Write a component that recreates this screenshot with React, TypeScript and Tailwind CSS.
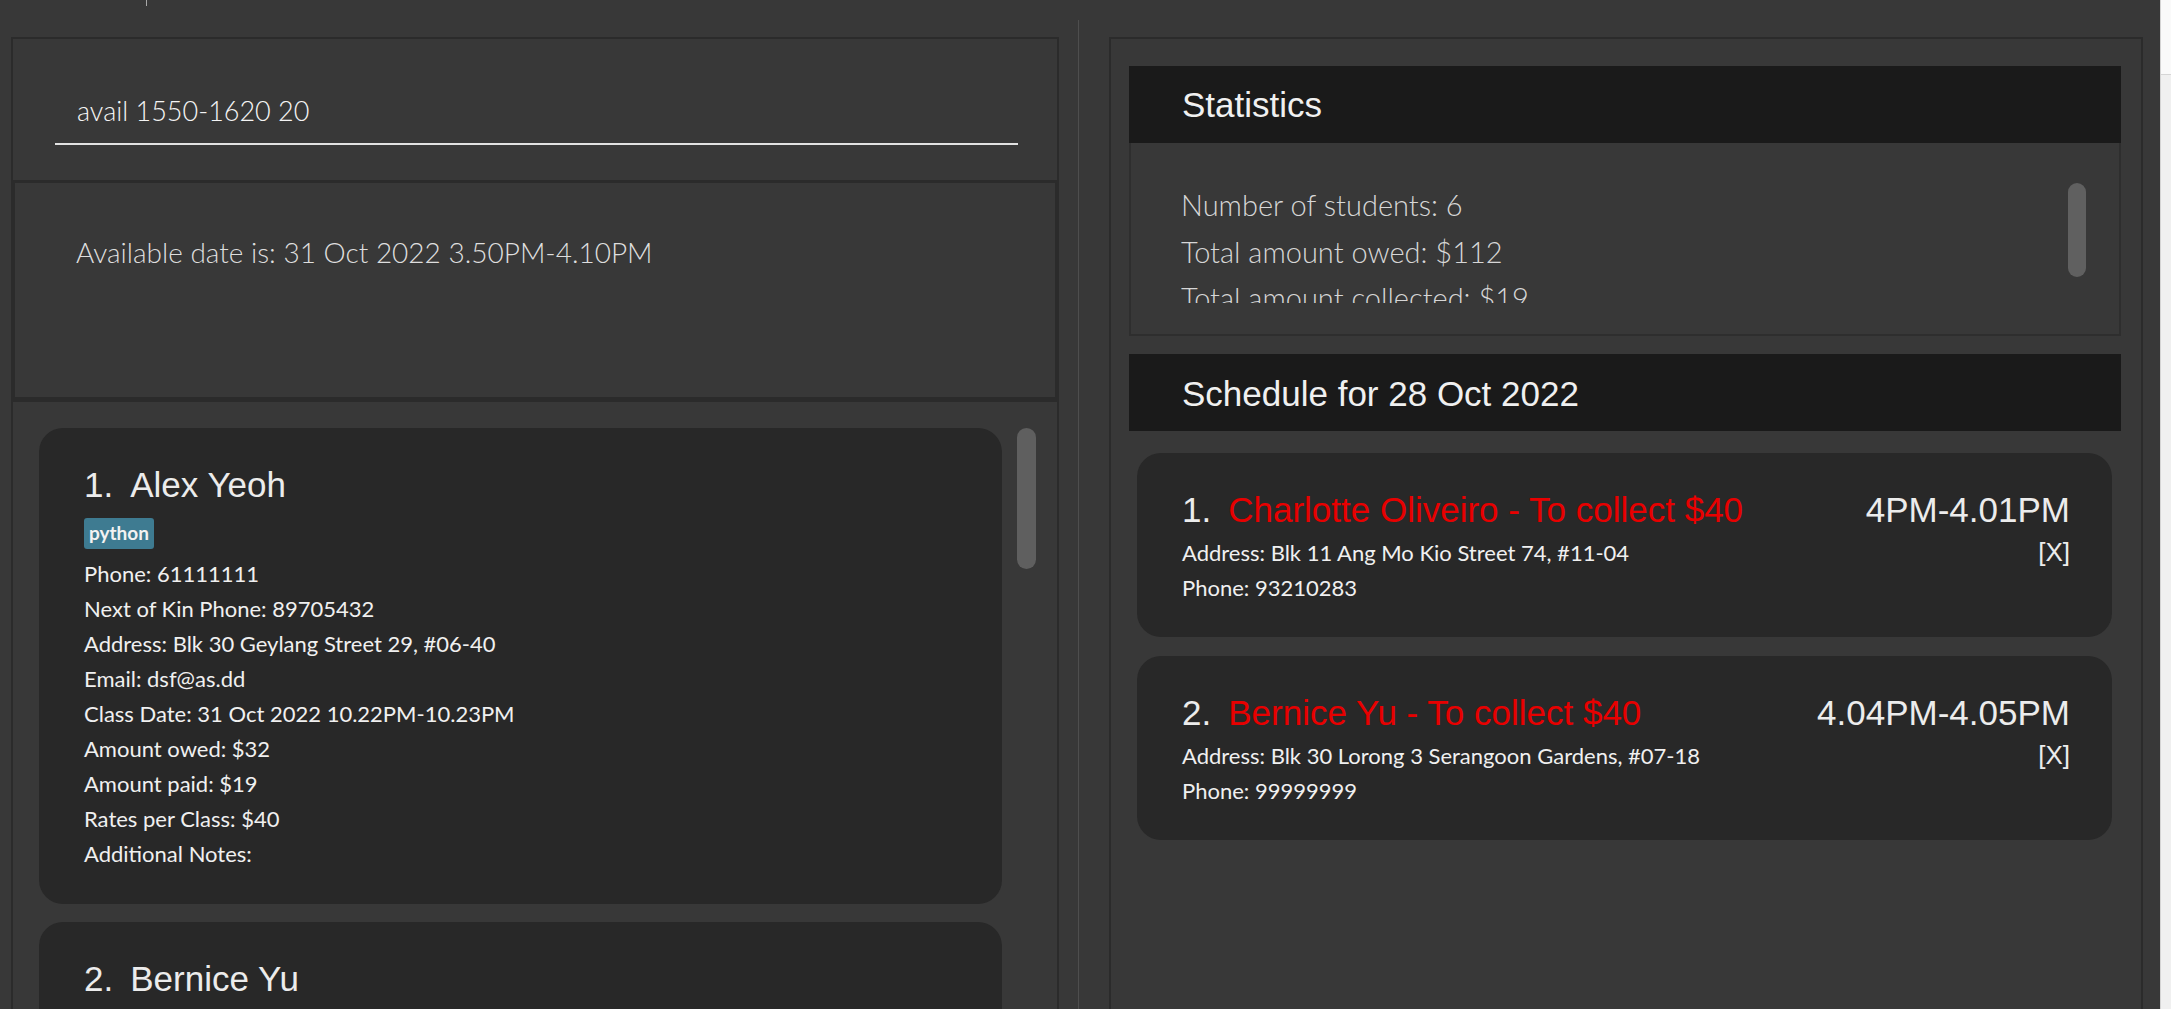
import React from "react";

const details = [
  "Phone: 61111111",
  "Next of Kin Phone: 89705432",
  "Address: Blk 30 Geylang Street 29, #06-40",
  "Email: dsf@as.dd",
  "Class Date: 31 Oct 2022 10.22PM-10.23PM",
  "Amount owed: $32",
  "Amount paid: $19",
  "Rates per Class: $40",
  "Additional Notes:",
];

function PersonCard() {
  return (
    <div className="w-[963px] rounded-[24px] bg-[#282828] pb-[33px] pl-[45px] pt-[37px]">
      <div className="flex font-['Liberation_Sans',Arial,sans-serif] text-[35px] leading-[39px] text-[#ececec]">
        <span>1.</span>
        <span className="ml-[17px]">Alex Yeoh</span>
      </div>
      <div className="mt-[14px] flex">
        <span className="flex h-[31px] items-center rounded-[3px] bg-[#3e7b91] px-[5px] font-['Lato',sans-serif] text-[19px] font-bold text-[#f2f2f2]">
          python
        </span>
      </div>
      <div className="mt-[7px] font-['Lato',sans-serif] text-[22px] leading-[35px] text-[#f0f0f0]">
        {details.map((d) => (
          <div key={d}>{d}</div>
        ))}
      </div>
    </div>
  );
}

function PersonCard2() {
  return (
    <div className="h-[200px] w-[963px] rounded-[24px] bg-[#282828] pl-[45px] pt-[37px]">
      <div className="flex font-['Liberation_Sans',Arial,sans-serif] text-[35px] leading-[39px] text-[#ececec]">
        <span>2.</span>
        <span className="ml-[17px]">Bernice Yu</span>
      </div>
    </div>
  );
}

function ScheduleCard({
  idx,
  name,
  time,
  address,
  phone,
}: {
  idx: string;
  name: string;
  time: string;
  address: string;
  phone: string;
}) {
  return (
    <div className="ml-[8px] mr-[9px] h-[184px] rounded-[24px] bg-[#282828] pl-[45px] pr-[42px] pt-[37px]">
      <div className="flex items-start justify-between font-['Liberation_Sans',Arial,sans-serif] text-[35px] leading-[39px]">
        <div className="flex">
          <span className="text-[#ececec]">{idx}</span>
          <span className="ml-[17px] text-[#e80000]">{name}</span>
        </div>
        <div className="text-[#ececec]">{time}</div>
      </div>
      <div className="mt-[6px] flex items-start justify-between">
        <div className="font-['Lato',sans-serif] text-[22px] leading-[35px] text-[#f0f0f0]">
          <div>{address}</div>
          <div>{phone}</div>
        </div>
        <div className="font-['Liberation_Sans',Arial,sans-serif] text-[26px] leading-[35px] text-[#ececec]">
          [X]
        </div>
      </div>
    </div>
  );
}

function LeftPane() {
  return (
    <div className="ml-[11px] mt-[17px] flex h-[1000px] w-[1048px] shrink-0 flex-col border-2 border-[#2b2b2b]">
      <div className="h-[141px] shrink-0 pl-[42px] pt-[52px]">
        <div className="w-[963px] border-b-[2px] border-[#e2e2e2] pb-[12px] pl-[22px] font-['Lato',sans-serif] text-[27px] font-light leading-[40px] text-[#f4f4f4]">
          avail 1550-1620 20
        </div>
      </div>
      <div className="h-[222px] shrink-0 border-x-2 border-b-[5px] border-t-[3px] border-[#2b2b2b] pl-[61px] pt-[49px]">
        <div className="font-['Lato',sans-serif] text-[28px] font-light leading-[40px] text-[#dedede]">
          Available date is: 31 Oct 2022 3.50PM-4.10PM
        </div>
      </div>
      <div className="flex flex-1 pl-[26px] pt-[26px]">
        <div className="flex flex-col gap-[18px]">
          <PersonCard />
          <PersonCard2 />
        </div>
        <div className="ml-[15px] h-[141px] w-[19px] rounded-full bg-[#5f5f5f]" />
      </div>
    </div>
  );
}

function RightPane() {
  return (
    <div className="ml-[30px] mt-[17px] flex h-[1000px] w-[1034px] shrink-0 flex-col border-2 border-[#2b2b2b] pl-[18px] pr-[20px] pt-[27px]">
      <div className="flex h-[77px] shrink-0 items-center bg-[#1a1a1a] pl-[53px] font-['Liberation_Sans',Arial,sans-serif] text-[35px] leading-[39px] text-[#f0f0f0]">
        Statistics
      </div>
      <div className="flex h-[193px] shrink-0 border-2 border-t-0 border-[#2e2e2e] pl-[50px]">
        <div className="mt-[39px] h-[121px] flex-1 overflow-hidden font-['Lato',sans-serif] text-[29px] font-light leading-[46.5px] text-[#d6d6d6]">
          <div>Number of students: 6</div>
          <div>Total amount owed: $112</div>
          <div>Total amount collected: $19</div>
        </div>
        <div className="mr-[33px] mt-[40px] h-[94px] w-[18px] rounded-full bg-[#606060]" />
      </div>
      <div className="mt-[18px] flex h-[77px] shrink-0 items-center bg-[#1a1a1a] pl-[53px] pt-[2px] font-['Liberation_Sans',Arial,sans-serif] text-[35px] leading-[39px] text-[#f0f0f0]">
        Schedule for 28 Oct 2022
      </div>
      <div className="mt-[22px] flex flex-col gap-[19px]">
        <ScheduleCard
          idx="1."
          name="Charlotte Oliveiro - To collect $40"
          time="4PM-4.01PM"
          address="Address: Blk 11 Ang Mo Kio Street 74, #11-04"
          phone="Phone: 93210283"
        />
        <ScheduleCard
          idx="2."
          name="Bernice Yu - To collect $40"
          time="4.04PM-4.05PM"
          address="Address: Blk 30 Lorong 3 Serangoon Gardens, #07-18"
          phone="Phone: 99999999"
        />
      </div>
    </div>
  );
}

export default function App() {
  return (
    <div className="flex h-[1009px] w-[2171px] overflow-hidden bg-[#383838]">
      <div className="flex w-[2160px] shrink-0 flex-col">
        <div className="h-[20px] shrink-0 pl-[146px]">
          <div className="h-[6px] w-px bg-[#a8a8a8]" />
        </div>
        <div className="flex flex-1 items-start">
          <LeftPane />
          <div className="ml-[19px] w-px self-stretch bg-[#4e4e4e]" />
          <RightPane />
        </div>
      </div>
      <div className="flex w-[11px] shrink-0 flex-col border-l border-[#d4d4d4]">
        <div className="h-[75px] shrink-0 border-b border-[#d6d6d6] bg-[#fafafa]" />
        <div className="flex-1 bg-[#f0f0f0]" />
      </div>
    </div>
  );
}
